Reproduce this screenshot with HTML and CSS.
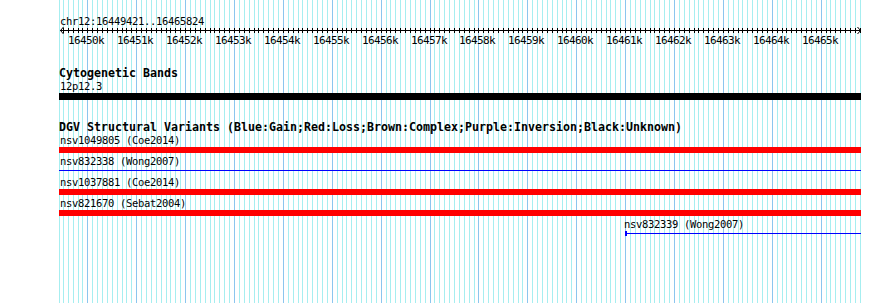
FILE: index.html
```html
<!DOCTYPE html>
<html lang="en">
<head>
  <meta charset="UTF-8" />
  <meta name="viewport" content="width=device-width, initial-scale=1.0"/>
  <title>chr12:16449421..16465824</title>
  <link rel="stylesheet" href="styles.css">
</head>
<body>
  <div class="panel">
    <svg class="grid" id="grid" width="890" height="303"></svg>

    <div class="track">
      <div class="label">chr12:16449421..16465824</div>
    </div>
    <svg class="ruler" id="ruler" width="890" height="20"></svg>

    <div class="track cyto">
      <h3>Cytogenetic Bands</h3>
      <div class="label">12p12.3</div>
      <div class="band"></div>
    </div>

    <div class="track dgv">
      <h3>DGV Structural Variants (Blue:Gain;Red:Loss;Brown:Complex;Purple:Inversion;Black:Unknown)</h3>
      <div class="feature">
        <div class="label">nsv1049805 (Coe2014)</div>
        <div class="bar loss"></div>
      </div>
      <div class="feature">
        <div class="label">nsv832338 (Wong2007)</div>
        <div class="bar gain"></div>
      </div>
      <div class="feature">
        <div class="label">nsv1037881 (Coe2014)</div>
        <div class="bar loss"></div>
      </div>
      <div class="feature">
        <div class="label">nsv821670 (Sebat2004)</div>
        <div class="bar loss"></div>
      </div>
      <div class="feature inside" style="margin-left: 566px">
        <div class="label">nsv832339 (Wong2007)</div>
        <div class="bar gain start"></div>
      </div>
    </div>
  </div>

  <script src="script.js"></script>
</body>
</html>
```

FILE: styles.css
```css
body {
  margin: 0;
  background: #fff;
  font-family: "DejaVu Sans Mono", "Liberation Mono", monospace;
  color: #000;
}

.panel {
  position: relative;
  isolation: isolate;
  width: 890px;
  height: 303px;
  overflow: hidden;
}

.grid {
  position: absolute;
  top: 0;
  left: 0;
  z-index: -1;
}

.ruler {
  display: block;
}

.ruler text {
  font-family: "DejaVu Sans Mono", "Liberation Mono", monospace;
  font-size: 11px;
  letter-spacing: -0.62px;
}

.track {
  margin-left: 59px;
  width: 802px;
}

.grid + .track {
  padding-top: 16px;
}

.label {
  font-size: 10.5px;
  letter-spacing: -0.32px;
  line-height: 10px;
  height: 10px;
  padding-left: 1px;
  white-space: nowrap;
}

h3 {
  margin: 0;
  font-size: 11.63px;
  line-height: 12px;
  height: 12px;
  font-weight: bold;
  white-space: nowrap;
}

.cyto {
  margin-top: 21px;
}

.cyto .label {
  margin-top: 2px;
}

.band {
  margin-top: 2px;
  height: 7px;
  background: #000;
}

.dgv {
  margin-top: 21px;
}

.dgv h3 {
  margin-bottom: 2px;
}

.feature {
  height: 21px;
}

.feature.inside .label {
  margin-left: -2px;
}

.bar {
  margin-top: 2px;
  height: 6px;
}

.bar.loss {
  background: #f00;
}

.bar.gain {
  background: linear-gradient(#00f, #00f) 0 2px / 100% 1px no-repeat;
}

.bar.gain.start {
  background:
    linear-gradient(#00f, #00f) 0 0 / 2px 5px no-repeat,
    linear-gradient(#00f, #00f) 0 2px / 100% 1px no-repeat;
}
```

FILE: script.js
```js
const START = 16449421;
const END = 16465824;
const LEFT = 59;
const WIDTH = 802;
const SVGNS = "http://www.w3.org/2000/svg";

function xOf(pos) {
  return Math.round(LEFT + (pos - START) * WIDTH / (END - START));
}

function add(svg, tag, attrs) {
  const el = document.createElementNS(SVGNS, tag);
  for (const k in attrs) el.setAttribute(k, attrs[k]);
  svg.appendChild(el);
  return el;
}

const grid = document.getElementById("grid");
const ruler = document.getElementById("ruler");

// grid: minor every 100bp, major every 1kb
add(grid, "rect", { x: LEFT, y: 0, width: 1, height: 303, fill: "#a6eef0" });
for (let p = Math.ceil(START / 100) * 100; p <= END; p += 100) {
  const x = xOf(p);
  const major = p % 1000 === 0;
  add(grid, "rect", { x: x, y: 0, width: 1, height: 303, fill: major ? "#8cc6ee" : "#a6eef0" });
  add(ruler, "rect", { x: x, y: 2, width: 1, height: 5, fill: "#000" });
  if (major) {
    const t = add(ruler, "text", { x: x - 1, y: 18, "text-anchor": "middle", fill: "#000" });
    t.textContent = (p / 1000) + "k";
  }
}

// ruler line with arrows at both ends
add(ruler, "rect", { x: 60, y: 4, width: 801, height: 1, fill: "#000" });
add(ruler, "polyline", { points: "63.5,1 60.5,4.5 63.5,8", fill: "none", stroke: "#000" });
add(ruler, "polyline", { points: "857.5,1 860.5,4.5 857.5,8", fill: "none", stroke: "#000" });
```
